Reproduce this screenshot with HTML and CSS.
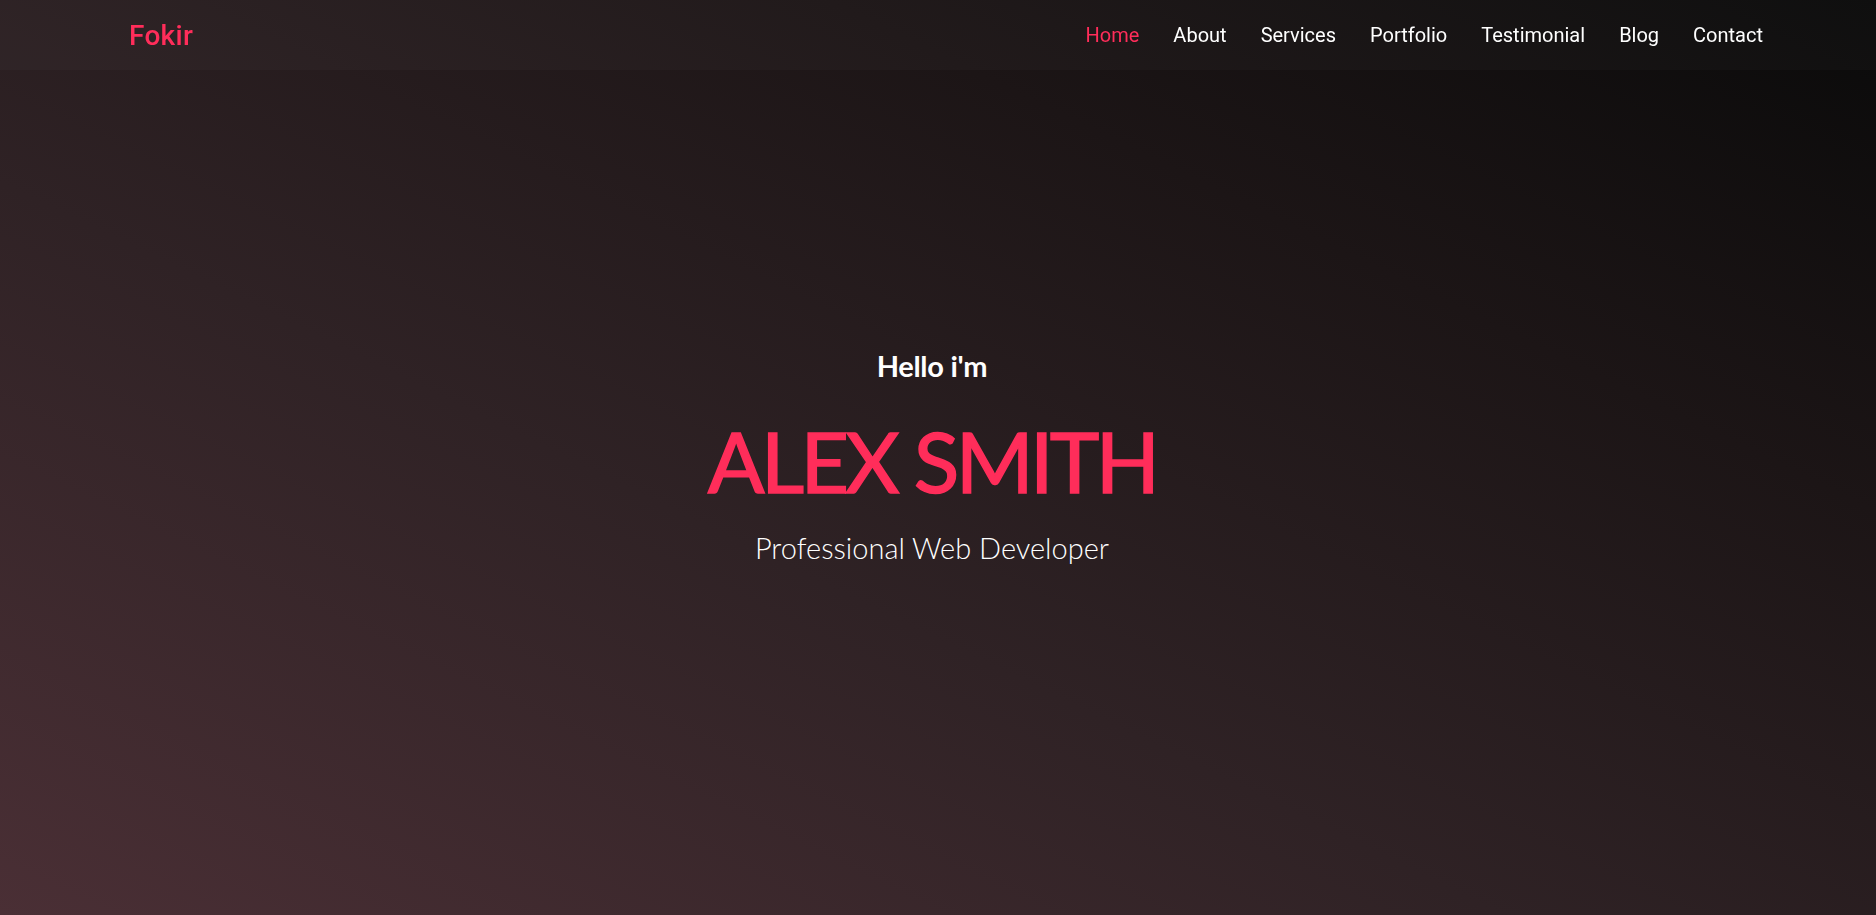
FILE: index.html
```html
<!DOCTYPE html>
<html lang="en">
<head>
<meta charset="utf-8">
<title>Fokir</title>
<link rel="stylesheet" href="styles.css">
</head>
<body>
<header class="site-header">
  <a class="logo" href="#">Fokir</a>
  <nav class="main-nav">
    <a class="nav-link active" href="#">Home</a>
    <a class="nav-link" href="#">About</a>
    <a class="nav-link" href="#">Services</a>
    <a class="nav-link" href="#">Portfolio</a>
    <a class="nav-link" href="#">Testimonial</a>
    <a class="nav-link" href="#">Blog</a>
    <a class="nav-link" href="#">Contact</a>
  </nav>
</header>
<section class="hero">
  <div class="hero-content">
    <h3 class="hello">Hello i'm</h3>
    <h1 class="name">ALEX SMITH</h1>
    <p class="role">Professional Web Developer</p>
  </div>
</section>
</body>
</html>
```

FILE: styles.css
```css
* { box-sizing: border-box; }
html, body { margin: 0; padding: 0; }
body {
  background: #1a1415;
  font-family: Roboto, "Liberation Sans", sans-serif;
  color: #fff;
  overflow: hidden;
}
a { text-decoration: none; color: inherit; }

.site-header {
  position: fixed;
  top: 0; left: 0; right: 0;
  height: 70px;
  display: flex;
  align-items: center;
  justify-content: space-between;
  padding: 0 113px 0 129px;
  background: rgba(255,255,255,0.025);
  z-index: 10;
}
.logo {
  font-family: Roboto, sans-serif;
  font-weight: 500;
  font-size: 28px;
  color: #ff2d5a;
  letter-spacing: 0.3px;
}
.main-nav {
  display: flex;
  gap: 34px;
}
.nav-link {
  font-size: 20px;
  font-weight: 400;
  color: #fff;
}
.nav-link.active { color: #ff2d5a; }

.hero {
  height: 100vh;
  display: flex;
  align-items: center;
  justify-content: center;
  padding-right: 12px;
  background: linear-gradient(to top right, #4a2f35 0%, #2f2225 40%, #1c1516 72%, #0a0a0a 100%);
}
.hero-content {
  text-align: center;
  font-family: Lato, "Open Sans", sans-serif;
}
.hello {
  margin: 0;
  font-size: 29px;
  font-weight: 700;
  letter-spacing: -0.3px;
  line-height: 1.2;
}
.name {
  margin: 31px 0 0;
  font-size: 84px;
  font-weight: 400;
  color: #ff2d5a;
  -webkit-text-stroke: 1.5px #ff2d5a;
  letter-spacing: -3.7px;
  line-height: 1.1;
}
.role {
  margin: 24px 0 0;
  font-size: 29px;
  font-weight: 300;
  line-height: 1.2;
}
```
